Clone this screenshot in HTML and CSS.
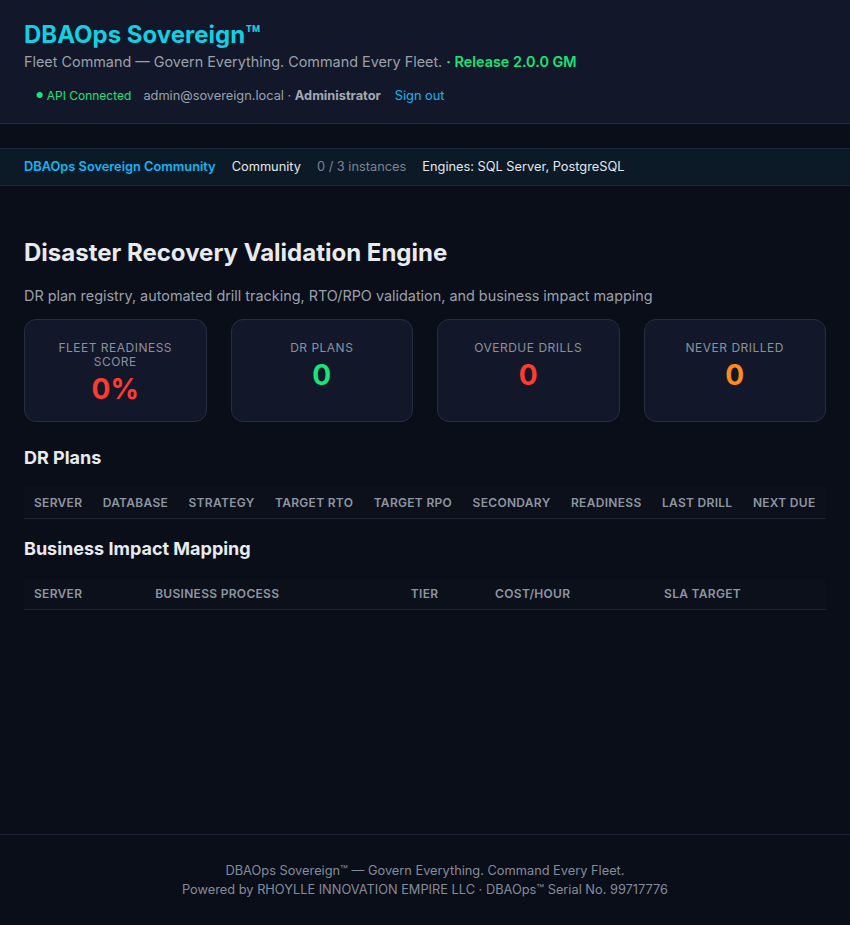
FILE: index.html
```html
<!DOCTYPE html>
<html lang="en">
<head>
    <meta charset="UTF-8">
    <meta name="viewport" content="width=device-width, initial-scale=1.0">
    <title>DBAOps Sovereign - Disaster Recovery</title>
    <link rel="stylesheet" href="styles.css">
</head>
<body>
    <header class="app-header">
        <h1 class="brand">DBAOps Sovereign™</h1>
        <p class="tagline">Fleet Command — Govern Everything. Command Every Fleet. <span class="release">· Release 2.0.0 GM</span></p>
        <div class="status-row">
            <span class="api-status"><span class="dot">●</span> API Connected</span>
            <span class="user">admin@sovereign.local · <strong>Administrator</strong></span>
            <button class="signout">Sign out</button>
        </div>
    </header>

    <div class="license-bar">
        <span class="edition">DBAOps Sovereign Community</span>
        <span class="tier">Community</span>
        <span class="count">0 / 3 instances</span>
        <span class="engines">Engines: SQL Server, PostgreSQL</span>
    </div>

    <main class="page">
        <h2 class="page-title">Disaster Recovery Validation Engine</h2>
        <p class="page-desc">DR plan registry, automated drill tracking, RTO/RPO validation, and business impact mapping</p>

        <div class="stats">
            <div class="stat-card">
                <div class="stat-label">Fleet Readiness Score</div>
                <div class="stat-value red">0%</div>
            </div>
            <div class="stat-card">
                <div class="stat-label">DR Plans</div>
                <div class="stat-value green">0</div>
            </div>
            <div class="stat-card">
                <div class="stat-label">Overdue Drills</div>
                <div class="stat-value red">0</div>
            </div>
            <div class="stat-card">
                <div class="stat-label">Never Drilled</div>
                <div class="stat-value orange">0</div>
            </div>
        </div>

        <h3 class="section-title">DR Plans</h3>
        <table class="data-table">
            <thead>
                <tr>
                    <th>Server</th>
                    <th>Database</th>
                    <th>Strategy</th>
                    <th>Target RTO</th>
                    <th>Target RPO</th>
                    <th>Secondary</th>
                    <th>Readiness</th>
                    <th>Last Drill</th>
                    <th>Next Due</th>
                </tr>
            </thead>
            <tbody></tbody>
        </table>

        <h3 class="section-title">Business Impact Mapping</h3>
        <table class="data-table">
            <thead>
                <tr>
                    <th>Server</th>
                    <th>Business Process</th>
                    <th>Tier</th>
                    <th>Cost/Hour</th>
                    <th>SLA Target</th>
                </tr>
            </thead>
            <tbody></tbody>
        </table>
    </main>

    <footer class="app-footer">
        <p>DBAOps Sovereign™ — Govern Everything. Command Every Fleet.</p>
        <p>Powered by RHOYLLE INNOVATION EMPIRE LLC · DBAOps™ Serial No. 99717776</p>
    </footer>
</body>
</html>
```

FILE: styles.css
```css
body {
    font-family: Inter, "Noto Sans", sans-serif;
    margin: 0;
    background-color: #0a0e19;
    color: #e5e7eb;
    min-height: 100vh;
    display: flex;
    flex-direction: column;
}
.app-header {
    background-color: #121829;
    padding: 20px 24px 16px;
    border-bottom: 1px solid #232a3b;
}
.brand {
    margin: 0;
    font-size: 24px;
    line-height: 29px;
    font-weight: 700;
    color: #12cfe2;
}
.tagline {
    margin: 4px 0 0;
    font-size: 14.4px;
    line-height: 17px;
    color: #9aa0ab;
}
.release {
    color: #19e37a;
    font-weight: 600;
}
.status-row {
    display: flex;
    align-items: center;
    gap: 12px;
    margin-top: 14px;
    font-size: 12.8px;
}
.api-status {
    padding: 4px 0 4px 12px;
    font-size: 12px;
    color: #19e37a;
}
.api-status .dot {
    font-size: 8px;
    vertical-align: 2px;
}
.user {
    color: #9aa0ab;
}
.user strong {
    color: #a3a9b4;
}
.signout {
    background: none;
    border: none;
    padding: 0 0 0 2px;
    font-family: inherit;
    font-size: 12.8px;
    color: #12b6f5;
    cursor: pointer;
}
.license-bar {
    margin-top: 24px;
    display: flex;
    gap: 16px;
    padding: 10px 24px;
    font-size: 12.8px;
    line-height: 16px;
    background-color: #0c1a27;
    border-top: 1px solid #15283a;
    border-bottom: 1px solid #15283a;
}
.edition {
    color: #12b6f5;
    font-weight: 600;
}
.tier,
.engines {
    color: #e5e7eb;
}
.count {
    color: #7c8491;
}
.page {
    flex: 1;
    padding: 28px 24px;
}
.page-title {
    margin: 24px 0 0;
    font-size: 24px;
    line-height: 29px;
    font-weight: 700;
    color: #e8eaee;
}
.page-desc {
    margin: 20px 0 14px;
    font-size: 14.4px;
    line-height: 18px;
    color: #9aa0ab;
}
.stats {
    display: grid;
    grid-template-columns: repeat(4, 1fr);
    gap: 24px;
}
.stat-card {
    background-color: #121829;
    border: 1px solid #262d3e;
    border-radius: 12px;
    padding: 21px 20px 18px;
    text-align: center;
}
.stat-label {
    font-size: 12px;
    line-height: 14px;
    letter-spacing: 0.5px;
    text-transform: uppercase;
    color: #8a919e;
}
.stat-value {
    margin-top: 6px;
    font-size: 28px;
    line-height: 28px;
    font-weight: 700;
}
.red {
    color: #ff3b30;
}
.green {
    color: #19e37a;
}
.orange {
    color: #ff8a1e;
}
.section-title {
    margin: 25px 0 18px;
    font-size: 18px;
    line-height: 22px;
    font-weight: 700;
    color: #e8eaee;
}
.data-table + .section-title {
    margin-top: 19px;
}
.data-table {
    width: 100%;
    border-collapse: collapse;
}
.data-table th {
    text-align: left;
    padding: 8px 10px;
    font-size: 12px;
    line-height: 15px;
    font-weight: 600;
    letter-spacing: 0.3px;
    text-transform: uppercase;
    color: #8e95a2;
    background-color: #0c101b;
    border-bottom: 1px solid #1e2433;
}
.app-footer {
    padding: 26px 24px;
    border-top: 1px solid #1e2433;
    text-align: center;
    font-size: 12.8px;
    line-height: 19px;
    color: #858c99;
}
.app-footer p {
    margin: 0;
}
```
